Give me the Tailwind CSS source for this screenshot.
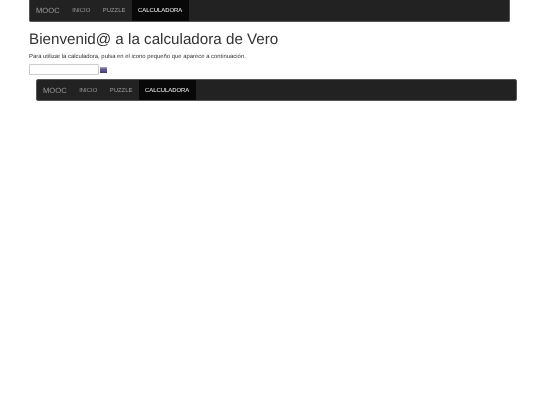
<!DOCTYPE html>
<html lang="es">
<head>
  <meta charset="UTF-8">
  <title>Calculadora</title>
  <script src="https://cdn.jsdelivr.net/npm/@tailwindcss/browser@4"></script>
</head>
<body class="bg-white font-['Liberation_Sans',Arial,sans-serif] text-[#333] antialiased [text-rendering:geometricPrecision]">
  <div class="will-change-transform">
  <div class="w-[481px] ml-[29px]">
    <!-- barra de navegacion superior -->
    <nav class="flex h-[22px] bg-[#222] rounded-b-[2px] border-x border-b border-[#555] text-[5.9px] leading-[22px]">
      <span class="pl-[6px] pr-[6.3px] text-[7.6px] text-[#9d9d9d]">MOOC</span>
      <span class="px-[6.3px] text-[#9d9d9d]">INICIO</span>
      <span class="px-[6.3px] text-[#9d9d9d]">PUZZLE</span>
      <span class="px-[6.3px] bg-[#080808] text-white">CALCULADORA</span>
    </nav>
    <h1 class="mt-[9px] text-[15.2px] leading-[17px] font-normal">Bienvenid@ a la calculadora de Vero</h1>
    <p class="mt-[5px] text-[5.9px] leading-[8px]">Para utilizar la calculadora, pulsa en el icono pequeño que aparece a continuación.</p>
    <div class="mt-[3px] flex items-center gap-[1px]">
      <input type="text" class="w-[70px] h-[11px] bg-white border border-[#ccc] rounded-[1px]">
      <svg class="w-[7px] h-[6px] mt-[1px]" viewBox="0 0 7 6"><rect width="7" height="6" fill="#5b5590"/><rect width="7" height="1.5" fill="#9a9ab0"/><rect y="4.5" width="7" height="1.5" fill="#46406f"/></svg>
    </div>
  </div>
  <div class="w-[481px] ml-[36px] mt-[4px]">
    <!-- segunda barra -->
    <nav class="flex h-[22px] bg-[#222] rounded-[2px] border border-[#555] text-[5.9px] leading-[22px]">
      <span class="pl-[6px] pr-[6.3px] text-[7.6px] text-[#9d9d9d]">MOOC</span>
      <span class="px-[6.3px] text-[#9d9d9d]">INICIO</span>
      <span class="px-[6.3px] text-[#9d9d9d]">PUZZLE</span>
      <span class="px-[6.3px] bg-[#080808] text-white">CALCULADORA</span>
    </nav>
  </div>
  </div>
</body>
</html>
